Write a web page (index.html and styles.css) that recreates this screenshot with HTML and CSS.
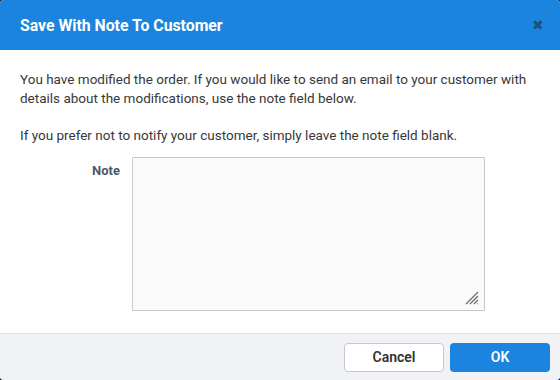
FILE: index.html
```html
<!DOCTYPE html>
<html lang="en">

<head>
    <meta charset="UTF-8">
    <meta name="viewport" content="width=device-width, initial-scale=1.0">
    <title>Save With Note To Customer</title>
    <link rel="stylesheet" href="styles.css">
</head>

<body>
    <div class="modal">
        <div class="modal_head">
            <h2 class="modal_title">Save With Note To Customer</h2>
            <span class="close_btn">&#x2716;</span>
        </div>
        <div class="modal_body">
            <p class="msg">You have modified the order. If you would like to send an email to your customer with details about the modifications, use the note field below.</p>
            <p class="msg">If you prefer not to notify your customer, simply leave the note field blank.</p>
            <div class="note_row">
                <label for="note" class="note_label">Note</label>
                <div class="note_wrap">
                    <textarea id="note" class="note_input"></textarea>
                    <!-- resize grip -->
                    <svg class="grip" width="14" height="14" viewBox="0 0 14 14">
                        <path d="M13 1 L1 13 M13 5 L5 13 M13 9 L9 13 M13 12.5 L12.5 13" stroke="#6f6f6f" stroke-width="1.3" fill="none" />
                    </svg>
                </div>
            </div>
        </div>
        <div class="modal_foot">
            <button class="btn btn_cancel">Cancel</button>
            <button class="btn btn_ok">OK</button>
        </div>
    </div>
</body>

</html>
```

FILE: styles.css
```css
body {
    margin: 0;
    padding: 0;
    background-color: #1c2533;
    font-family: Roboto, "Liberation Sans", sans-serif;
}

.modal {
    width: 560px;
    height: 380px;
    display: flex;
    flex-direction: column;
    background-color: white;
    border-radius: 4px;
    overflow: hidden;
}

.modal_head {
    height: 50px;
    flex-shrink: 0;
    display: flex;
    align-items: center;
    justify-content: space-between;
    padding: 0 16px 0 20px;
    background-color: #1a84df;
}

.modal_title {
    margin: 0;
    font-size: 15.8px;
    font-weight: bold;
    color: white;
}

.close_btn {
    font-size: 14px;
    color: #1e4f80;
    line-height: 1;
}

.modal_body {
    flex: 1;
    padding: 20px 20px 0 20px;
}

.msg {
    margin: 0 0 18px 0;
    font-size: 13.5px;
    line-height: 19px;
    color: #383838;
}

.msg + .msg {
    margin-bottom: 12px;
}

.note_row {
    display: flex;
    align-items: flex-start;
}

.note_label {
    width: 100px;
    text-align: right;
    padding-top: 6px;
    margin-right: 12px;
    font-size: 13px;
    line-height: 16px;
    font-weight: bold;
    color: #4b5a6a;
}

.note_wrap {
    position: relative;
    width: 353px;
    height: 154px;
}

.note_input {
    display: block;
    width: 100%;
    height: 100%;
    box-sizing: border-box;
    margin: 0;
    border: 1px solid #c8c8c8;
    border-radius: 1px;
    background-color: #fafafa;
    resize: none;
}

.grip {
    position: absolute;
    right: 6px;
    bottom: 6px;
}

.modal_foot {
    height: 46px;
    flex-shrink: 0;
    display: flex;
    align-items: center;
    justify-content: flex-end;
    gap: 6px;
    padding: 0 10px;
    border-top: 1px solid #dde1e6;
    background-color: #f0f2f5;
}

.btn {
    width: 100px;
    height: 29px;
    border-radius: 4px;
    font-family: Roboto, "Liberation Sans", sans-serif;
    font-size: 14px;
    font-weight: 600;
}

.btn_cancel {
    border: 1px solid #c6cad0;
    background-color: white;
    color: #333;
}

.btn_ok {
    border: none;
    background-color: #1a84df;
    color: white;
}
```
